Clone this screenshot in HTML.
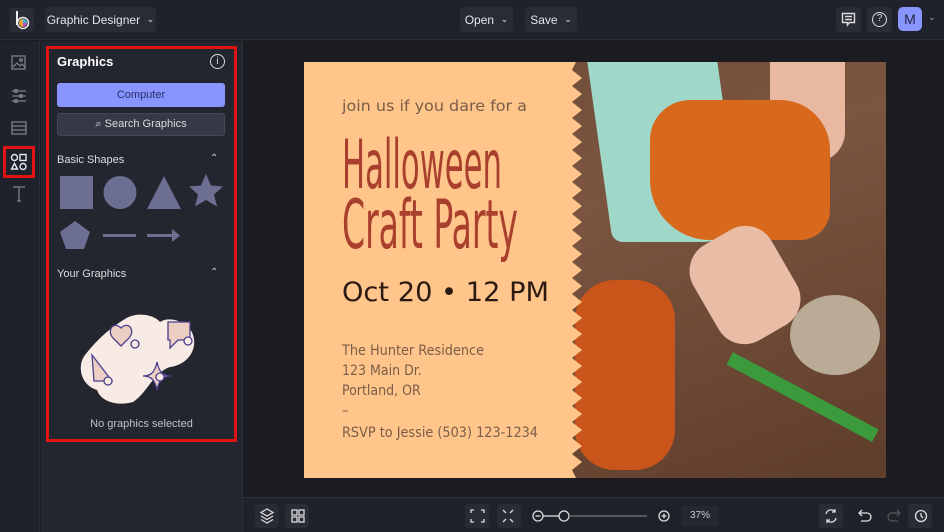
<!DOCTYPE html>
<html><head><meta charset="utf-8"><style>
*{margin:0;padding:0;box-sizing:border-box}
body{width:944px;height:532px;background:#1b1c22;font-family:"Liberation Sans",sans-serif;position:relative;overflow:hidden;color:#e6e6ee}
.abs{position:absolute}
.top{left:0;top:0;width:944px;height:40px;background:#20222b;border-bottom:1px solid #2c2e38}
.btn{background:#292b35;border-radius:4px;color:#e4e4ec;font-size:12px;display:flex;align-items:center;justify-content:center;white-space:nowrap}
.side{left:0;top:41px;width:40px;height:491px;background:#20222b;border-right:1px solid #2c2e38}
.panel{left:41px;top:41px;width:202px;height:491px;background:#23252f;border-right:1px solid #2c2e38}
.bot{left:243px;top:497px;width:701px;height:35px;background:#20222b;border-top:1px solid #2c2e38}
.ib{background:#292b35;border-radius:4px;width:24px;height:24px}
.t{font-family:"DejaVu Sans Condensed","DejaVu Sans",sans-serif;color:#7a5d48;white-space:nowrap}
</style></head><body>
<div class="abs top"></div>
<div class="abs" style="left:10px;top:8px;width:24px;height:24px;background:#2a2c36;border-radius:4px"></div>
<svg class="abs" style="left:14px;top:10px" width="16" height="20"><rect x="2" y="1" width="2" height="14" fill="#eee"/><circle cx="9" cy="13" r="5.5" fill="none" stroke="#eee" stroke-width="1.5"/><circle cx="9" cy="13" r="4" fill="#e9a53a"/><path d="M9 13L9 9A4 4 0 0 1 13 13Z" fill="#3bb5e0"/><path d="M9 13L13 13A4 4 0 0 1 9 17Z" fill="#c24ab8"/></svg>
<div class="abs btn" style="left:45px;top:7px;width:111px;height:25px">Graphic Designer &nbsp;<span style="font-size:9px">⌄</span></div>
<div class="abs btn" style="left:460px;top:7px;width:53px;height:25px">Open &nbsp;<span style="font-size:9px">⌄</span></div>
<div class="abs btn" style="left:525px;top:7px;width:52px;height:25px">Save &nbsp;<span style="font-size:9px">⌄</span></div>
<div class="abs ib" style="left:836px;top:7px;width:25px;height:25px"></div>
<svg class="abs" style="left:841px;top:12px" width="15" height="15" fill="none" stroke="#ddd" stroke-width="1.4"><path d="M1.5 1.5h12v9h-5l-2 2.5v-2.5h-5z"/><path d="M4 4.5h7M4 7.5h7"/></svg>
<div class="abs ib" style="left:867px;top:7px;width:25px;height:25px"></div>
<div class="abs" style="left:872px;top:12px;width:15px;height:15px;border:1.4px solid #ddd;border-radius:50%;font-size:10px;text-align:center;line-height:12px;color:#ddd">?</div>
<div class="abs" style="left:898px;top:7px;width:24px;height:24px;background:#8895ff;border-radius:5px;color:#1e2140;font-size:14px;text-align:center;line-height:24px">M</div>
<div class="abs" style="left:928px;top:12px;font-size:9px;color:#aaa">⌄</div>

<div class="abs side"></div>
<svg class="abs" style="left:10px;top:54px" width="18" height="160" fill="none" stroke="#7d7f8c" stroke-width="1.3">
<rect x="2" y="2" width="13" height="13"/><path d="M3 13l4-4 3 3 2-2 3 3"/><circle cx="11" cy="6" r="1.3"/>
<path d="M2 37h14M2 42h14M2 47h14"/><circle cx="6" cy="37" r="1.5"/><circle cx="11" cy="42" r="1.5"/><circle cx="6" cy="47" r="1.5"/>
<rect x="2" y="68" width="14" height="12"/><path d="M2 72h14M2 76h14"/>
<path d="M3 133h12M9 133v14M7 147h4"/></svg>
<div class="abs" style="left:3px;top:146px;width:32px;height:32px;border:3px solid #e01414"></div>
<svg class="abs" style="left:10px;top:153px" width="18" height="18" fill="none" stroke="#e6e6ee" stroke-width="1.4"><circle cx="4.5" cy="4.5" r="3"/><rect x="10" y="1.5" width="6" height="6"/><path d="M4.5 10.5l3 5.5h-6z"/><circle cx="13" cy="13.5" r="3"/></svg>

<div class="abs panel"></div>
<div class="abs" style="left:46px;top:46px;width:191px;height:396px;border:3px solid #e01414"></div>
<div class="abs" style="left:57px;top:54px;font-size:13px;font-weight:bold;color:#fff">Graphics</div>
<div class="abs" style="left:210px;top:54px;width:15px;height:15px;border:1.3px solid #ddd;border-radius:50%;font-size:10px;text-align:center;line-height:13px;color:#ddd">i</div>
<div class="abs" style="left:57px;top:83px;width:168px;height:24px;background:#8895ff;border-radius:3px;color:#2a2f6a;font-size:11px;text-align:center;line-height:24px">Computer</div>
<div class="abs" style="left:57px;top:113px;width:168px;height:23px;background:#363845;border:1px solid #454857;border-radius:3px;color:#ddd;font-size:11px;text-align:center;line-height:21px">⌕ Search Graphics</div>
<div class="abs" style="left:57px;top:154px;font-size:11px;color:#ddd">Basic Shapes</div>
<div class="abs" style="left:210px;top:153px;font-size:10px;color:#ccc">⌃</div>
<svg class="abs" style="left:58px;top:174px" width="168" height="80" fill="#6c6f91">
<rect x="2" y="2" width="33" height="33"/><circle cx="62" cy="18.5" r="16.5"/><path d="M106 2l17 33h-34z"/><path d="M148 0l5 11.5 12 1-9 8 3 12-11-6.5-11 6.5 3-12-9-8 12-1z"/>
<path d="M17 47l15 11-6 17h-18l-6-17z"/><rect x="45" y="60" width="33" height="3"/><rect x="89" y="60" width="26" height="3"/><path d="M114 55l8 6.5-8 6.5z"/></svg>
<div class="abs" style="left:57px;top:268px;font-size:11px;color:#ddd">Your Graphics</div>
<div class="abs" style="left:210px;top:267px;font-size:10px;color:#ccc">⌃</div>
<svg class="abs" style="left:75px;top:305px" width="130" height="100">
<path d="M50 14C62 6 80 10 85 17C95 10 115 18 118 30C123 45 112 60 95 62C78 68 72 88 58 97C40 102 25 95 22 85C5 80 2 60 10 50C18 40 30 26 50 14Z" fill="#f8ebe6"/>
<g fill="#eccfc2" stroke="#4a3f8c" stroke-width="1.3"><path d="M40 35c-10-8-2-20 6-12c8-8 16 4 6 12l-6 6z"/><path d="M93 17h22v18h-12l-8 8v-8h-2z"/><path d="M17 50l20 26h-18z"/><path d="M82 57c2 10 6 14 14 14c-8 0-12 4-14 14c-2-10-6-14-14-14c8 0 12-4 14-14z"/>
<circle cx="60" cy="39" r="4" fill="#f8ebe6"/><circle cx="113" cy="36" r="4" fill="#f8ebe6"/><circle cx="33" cy="76" r="4" fill="#f8ebe6"/><circle cx="85" cy="72" r="4" fill="#f8ebe6"/></g></svg>
<div class="abs" style="left:47px;top:418px;width:189px;text-align:center;font-size:11px;color:#bfc0cc">No graphics selected</div>

<!-- design -->
<div class="abs" style="left:304px;top:62px;width:582px;height:416px;background:linear-gradient(160deg,#6e4a35 0%,#7b5540 40%,#5e3d2a 100%)"></div>
<div class="abs" style="left:600px;top:62px;width:130px;height:180px;background:#9fd8c8;border-radius:0 0 40px 10px;transform:skewX(8deg)"></div>
<div class="abs" style="left:770px;top:62px;width:75px;height:100px;background:#e8b9a0;border-radius:0 0 30px 30px"></div>
<div class="abs" style="left:650px;top:100px;width:180px;height:140px;background:#d8691c;border-radius:40px 50px 30px 60px"></div>
<div class="abs" style="left:700px;top:230px;width:90px;height:110px;background:#e8bca5;border-radius:30px;transform:rotate(-30deg)"></div>
<div class="abs" style="left:575px;top:280px;width:100px;height:190px;background:#c9551a;border-radius:40px"></div>
<div class="abs" style="left:790px;top:295px;width:90px;height:80px;background:#b9ab96;border-radius:50%"></div>
<div class="abs" style="left:720px;top:390px;width:165px;height:14px;background:#3a9a3c;transform:rotate(28deg)"></div>
<svg class="abs" style="left:304px;top:62px" width="290" height="416"><path d="M0 0H272 L268 8 L278 16 L268 24 L278 32 L268 40 L278 48 L268 56 L278 64 L268 72 L278 80 L268 88 L278 96 L268 104 L278 112 L268 120 L278 128 L268 136 L278 144 L268 152 L278 160 L268 168 L278 176 L268 184 L278 192 L268 200 L278 208 L268 216 L278 224 L268 232 L278 240 L268 248 L278 256 L268 264 L278 272 L268 280 L278 288 L268 296 L278 304 L268 312 L278 320 L268 328 L278 336 L268 344 L278 352 L268 360 L278 368 L268 376 L278 384 L268 392 L278 400 L268 408 L272 416 H0Z" fill="#ffc58a"/>
<g font-family="DejaVu Sans Condensed, DejaVu Sans, sans-serif" fill="#a9402e" font-size="68">
<text x="38" y="126" textLength="160" lengthAdjust="spacingAndGlyphs">Halloween</text>
<text x="38" y="186" textLength="176" lengthAdjust="spacingAndGlyphs">Craft Party</text></g>
<g font-family="DejaVu Sans Condensed, DejaVu Sans, sans-serif" fill="#7a5d48" font-size="15">
<text x="38" y="49" textLength="185" lengthAdjust="spacingAndGlyphs">join us if you dare for a</text></g>
<text x="38" y="239" font-family="DejaVu Sans, sans-serif" font-size="27" fill="#2a1a12" textLength="207" lengthAdjust="spacingAndGlyphs">Oct 20 • 12 PM</text>
<g font-family="DejaVu Sans Condensed, DejaVu Sans, sans-serif" fill="#7a5d48" font-size="14">
<text x="38" y="293" textLength="142" lengthAdjust="spacingAndGlyphs">The Hunter Residence</text>
<text x="38" y="313">123 Main Dr.</text>
<text x="38" y="333">Portland, OR</text>
<text x="38" y="353">–</text>
<text x="38" y="375" textLength="196" lengthAdjust="spacingAndGlyphs">RSVP to Jessie (503) 123-1234</text></g></svg>

<div class="abs bot"></div>
<div class="abs ib" style="left:255px;top:504px"></div><div class="abs ib" style="left:285px;top:504px"></div>
<div class="abs ib" style="left:465px;top:504px"></div><div class="abs ib" style="left:497px;top:504px"></div>
<svg class="abs" style="left:255px;top:504px" width="400" height="24" fill="none" stroke="#ddd" stroke-width="1.3">
<path d="M12 5l6 3.5-6 3.5-6-3.5z M6 12l6 3.5 6-3.5M6 15.5l6 3.5 6-3.5"/><rect x="37" y="6" width="5" height="5"/><rect x="44" y="6" width="5" height="5"/><rect x="37" y="13" width="5" height="5"/><rect x="44" y="13" width="5" height="5"/>
<path d="M216 9V6h3M226 6h3v3M229 15v3h-3M219 18h-3v-3"/><path d="M248 6l3 3M258 6l-3 3M248 18l3-3M258 18l-3-3"/>
<circle cx="283" cy="12" r="5"/><path d="M280.5 12h5"/><path d="M288 12h16"/><circle cx="309" cy="12" r="5"/><path d="M314 12h78" stroke="#777"/></svg>
<svg class="abs" style="left:655px;top:506px" width="20" height="20" fill="none" stroke="#ddd" stroke-width="1.3"><circle cx="9" cy="10" r="5"/><path d="M6.5 10h5M9 7.5v5"/></svg>
<div class="abs" style="left:682px;top:506px;width:36px;height:20px;background:#252731;font-size:10px;color:#ccc;text-align:center;line-height:20px">37%</div>
<div class="abs ib" style="left:819px;top:504px"></div><div class="abs ib" style="left:908px;top:504px"></div>
<svg class="abs" style="left:819px;top:504px" width="120" height="24" fill="none" stroke="#ddd" stroke-width="1.3">
<path d="M7 10a5 5 0 0 1 9-2M17 14a5 5 0 0 1-9 2M16 5v3h-3M8 19v-3h3"/>
<path d="M40 9h8a4 4 0 0 1 0 8h-6M43 6l-3 3 3 3"/><path d="M81 9h-8a4 4 0 0 0 0 8h6M78 6l3 3-3 3" stroke="#555"/>
<circle cx="102" cy="12" r="5.5"/><path d="M102 9v3l2 2"/></svg>
</body></html>
